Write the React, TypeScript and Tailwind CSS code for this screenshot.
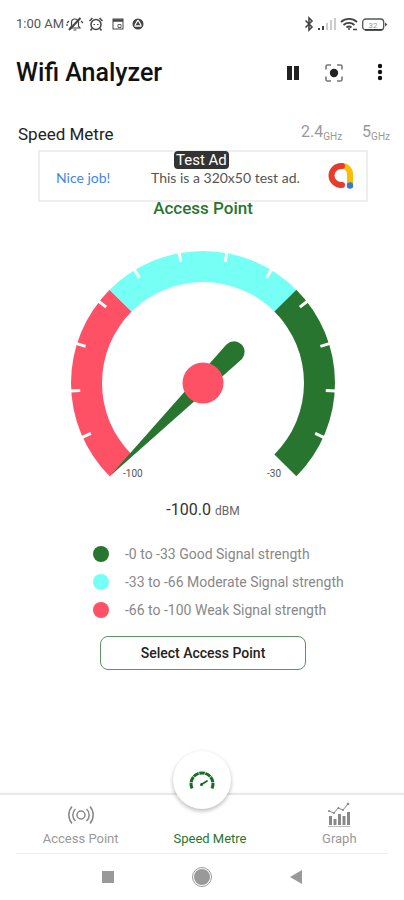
import type { ReactNode } from "react";

const CX = 133;
const CY = 133;

function point(radius: number, degrees: number): [number, number] {
  const a = (degrees * Math.PI) / 180;
  return [CX + radius * Math.cos(a), CY - radius * Math.sin(a)];
}

function band(from: number, to: number): string {
  const [x1, y1] = point(132, from);
  const [x2, y2] = point(132, to);
  const [x3, y3] = point(101, to);
  const [x4, y4] = point(101, from);
  return `M${x1} ${y1}A132 132 0 0 1 ${x2} ${y2}L${x3} ${y3}A101 101 0 0 0 ${x4} ${y4}Z`;
}

const TICKS = Array.from({ length: 12 }, (_, i) => 225 - ((i + 1) * 270) / 13);

function Gauge() {
  return (
    <svg viewBox="0 0 266 232" className="h-[232px] w-[266px]" role="img" aria-label="Signal gauge">
      <path d={band(225, 135)} fill="#ff5166" />
      <path d={band(135, 45)} fill="#76fff5" />
      <path d={band(45, -45)} fill="#28752f" />
      {TICKS.map((t) => {
        const [x1, y1] = point(133, t);
        const [x2, y2] = point(123, t);
        return <line key={t} x1={x1} y1={y1} x2={x2} y2={y2} stroke="#fff" strokeWidth="3" />;
      })}
      <path d="M39.5 226.5 156 95A10.5 10.5 0 0 1 172 109Z" fill="#28752f" />
      <circle cx={CX} cy={CY} r="20.5" fill="#ff5166" />
      <text x="53" y="227" fontSize="10" fill="#555" className="font-[Roboto,sans-serif]">-100</text>
      <text x="197" y="227" fontSize="10" fill="#555" className="font-[Roboto,sans-serif]">-30</text>
    </svg>
  );
}

function StatusBar() {
  return (
    <div className="flex h-12 items-center justify-between px-4 text-[#444]">
      <div className="flex items-center">
        <span className="w-[50px] text-[13px] whitespace-nowrap text-[#555]">1:00 AM</span>
        <svg viewBox="0 0 18 16" className="h-4 w-[18px]" fill="none" stroke="currentColor" strokeWidth="1.2">
          <path d="M4 12h10l-1.500-2V6.500A3.500 3.500 0 0 0 9 3 3.500 3.500 0 0 0 5.500 6.500V10ZM7.500 14h3M1 7l2-2M1 10V8M17 7l-2-2" />
          <path d="M3 14 14.500 2" strokeWidth="2" />
        </svg>
        <svg viewBox="0 0 16 16" className="ml-1 size-4" fill="none" stroke="currentColor" strokeWidth="1.500">
          <circle cx="8" cy="8.500" r="5" />
          <path d="M1.500 5 4.500 2M14.500 5l-3-3M4 12.500 2.500 14.500M12 12.500l1.500 2" />
          <path d="M5.500 8.500H7M9 8.500h1.500" strokeWidth="1.200" />
        </svg>
        <svg viewBox="0 0 12 12" className="ml-2 size-3" fill="none" stroke="currentColor">
          <rect x="1" y="1" width="10" height="10" />
          <path d="M1 2.500h10" strokeWidth="2.500" />
          <path d="M6 6.500h3v3H6z" strokeWidth=".8" />
        </svg>
        <svg viewBox="0 0 12 12" className="ml-2 size-3">
          <circle cx="6" cy="6" r="5.500" fill="currentColor" />
          <path d="M6 2 3 7M6 2l3 5M2.500 8h7" stroke="#fff" strokeWidth="1.300" fill="none" />
        </svg>
      </div>
      <div className="flex items-center">
        <svg viewBox="0 0 10 16" className="mr-1 h-4 w-[10px]" fill="none" stroke="currentColor" strokeWidth="1.600">
          <path d="m1.500 4.500 6.500 6.500-3 3V2l3 3-6.500 6.500" />
        </svg>
        <svg viewBox="0 0 18 12" className="h-3 w-[18px]" fill="currentColor">
          <path d="M0 10h2v2H0zM4 8h2v4H4z" />
          <path d="M8 5h2v7H8zM12 2h2v10h-2zM16 0h2v12h-2z" fill="#ccc" />
        </svg>
        <svg viewBox="0 0 18 14" className="ml-1 h-[14px] w-[18px]" fill="none" stroke="currentColor" strokeWidth="1.800">
          <path d="M1 5a12 12 0 0 1 16 0M3.500 8a8 8 0 0 1 11 0M6.500 10.500a4 4 0 0 1 5 0" />
          <path d="M8 12h2M13 12.500h4" strokeWidth="1.600" />
        </svg>
        <svg viewBox="0 0 26 13" className="ml-1 h-[13px] w-[26px]">
          <rect x=".7" y="1" width="21" height="11" rx="3" fill="none" stroke="#555" strokeWidth="1.300" />
          <path d="M3 11.800h17" stroke="#333" strokeWidth="1.500" />
          <path d="M23 4.500 25.500 6.500 23 8.500z" fill="#555" />
          <text x="11" y="9.500" fontSize="8" fill="#999" textAnchor="middle">32</text>
        </svg>
      </div>
    </div>
  );
}

function Header() {
  return (
    <header className="flex h-[50px] items-center justify-between pr-3 pl-4">
      <h1 className="text-[25px] font-medium text-[#111]">Wifi Analyzer</h1>
      <div className="flex items-center">
        <button type="button" aria-label="Pause" className="mr-[22px]">
          <svg viewBox="0 0 18 18" className="size-[18px]"><path d="M3 2h5v14H3zM10 2h5v14h-5z" fill="#222" /></svg>
        </button>
        <button type="button" aria-label="Scan" className="mr-6">
          <svg viewBox="0 0 20 20" className="size-5" fill="none" stroke="#777" strokeWidth="1.600">
            <path d="M2 6.500V3.500Q2 2 3.500 2H7M13 2h3.500Q18 2 18 3.500v3M18 13.500v3q0 1.500-1.500 1.500H13M7 18H3.500Q2 18 2 16.500v-3" />
            <circle cx="10" cy="10" r="4.200" fill="#222" stroke="none" />
          </svg>
        </button>
        <button type="button" aria-label="More options" className="w-6">
          <svg viewBox="0 0 24 20" className="h-5 w-6" fill="#111">
            <circle cx="12" cy="3" r="2.200" /><circle cx="12" cy="9" r="2.200" /><circle cx="12" cy="15" r="2.200" />
          </svg>
        </button>
      </div>
    </header>
  );
}

function AdBanner() {
  return (
    <a href="#ad" className="relative flex h-[52px] w-[330px] items-center border-2 border-[#eee] font-[Lato,sans-serif] text-sm leading-4">
      <span className="w-[111px] pt-1 pl-4 text-[#4384e8]">Nice job!</span>
      <span className="flex-1 pt-1 whitespace-nowrap text-[#555]">This is a 320x50 test ad.</span>
      <svg viewBox="0 0 26 28" className="mr-3 h-7 w-[26px]" fill="none" strokeWidth="6" strokeLinecap="round">
        <path d="M14 4a8 8 0 0 1 8 8v11" stroke="#fbbc04" />
        <path d="M14 4h-1a9.500 9.500 0 0 0 0 19h1" stroke="#e63c2e" />
        <circle cx="22" cy="23.500" r="3.200" fill="#3478d8" stroke="none" />
      </svg>
      <span className="absolute -top-px left-[134px] rounded-sm bg-[#333] px-[2px] font-[Roboto,sans-serif] text-[15px] leading-[18px] whitespace-nowrap text-white">Test Ad</span>
    </a>
  );
}

const LEGEND = [
  { dot: "bg-[#28752f]", text: "-0 to -33 Good Signal strength" },
  { dot: "bg-[#76fff5]", text: "-33 to -66 Moderate Signal strength" },
  { dot: "bg-[#ff5166]", text: "-66 to -100 Weak Signal strength" },
];

function Tab({ label, active, children }: { label: string; active?: boolean; children?: ReactNode }) {
  return (
    <a href="#tab" aria-current={active ? "page" : undefined} className={`flex flex-1 flex-col items-center text-[13px] leading-4 ${active ? "text-[#28752f]" : "text-[#999]"}`}>
      <span className="flex h-9 items-center pt-1">{children}</span>
      <span className="whitespace-nowrap">{label}</span>
    </a>
  );
}

function BottomNav() {
  return (
    <nav className="relative flex h-[60px] border-t-2 border-[#e8e8e8] pl-4 shadow-[0_-1px_2px_#00000008]">
      <Tab label="Access Point">
        <svg viewBox="0 0 26 20" className="h-5 w-[26px]" fill="none" stroke="#888" strokeWidth="1.500">
          <circle cx="13" cy="10" r="4" />
          <path d="M7.500 4a8 8 0 0 0 0 12M18.500 4a8 8 0 0 1 0 12M4 1.500a13 13 0 0 0 0 17M22 1.500a13 13 0 0 1 0 17" />
        </svg>
      </Tab>
      <Tab label="Speed Metre" active />
      <Tab label="Graph">
        <svg viewBox="0 0 24 26" className="h-[26px] w-6" fill="#888">
          <path d="M2 14h3v9H2zM6.500 17h3v6h-3zM11 12h3v11h-3zM15.500 14h3v9h-3zM20 10h3v13h-3z" />
          <path d="M1 24.500h22" stroke="#bbb" />
          <path d="m2 9 5 2 4-5 5 2 5-6" fill="none" stroke="#888" />
          <circle cx="2" cy="9" r="1" /><circle cx="7" cy="11" r="1" /><circle cx="11.500" cy="6" r="1" /><circle cx="16" cy="8" r="1" /><circle cx="21" cy="2" r="1.300" />
        </svg>
      </Tab>
      <button type="button" aria-label="Speed Metre" className="absolute -top-11 left-1/2 flex size-[58px] -translate-x-1/2 items-center justify-center rounded-full bg-white shadow-[0_2px_4px_#00000045]">
        <svg viewBox="0 0 26 20" className="h-5 w-[26px]" fill="none" stroke="#176b27">
          <path d="M3 18.500A11 11 0 1 1 23 18.500" pathLength="69" strokeWidth="3" strokeDasharray="9 1" />
          <path d="m12.500 14.500 5.500-3.500" strokeWidth="1.800" strokeLinecap="round" />
          <circle cx="12.500" cy="14.500" r="1.500" fill="#176b27" stroke="none" />
        </svg>
      </button>
    </nav>
  );
}

export default function App() {
  return (
    <div className="flex min-h-screen flex-col bg-white font-[Roboto,sans-serif]">
      <StatusBar />
      <Header />
      <main className="flex flex-1 flex-col items-center pl-0.5">
        <div className="mt-6 flex h-7 w-full items-start justify-between pr-3.5 pl-4 leading-6">
          <h2 className="text-[17px] text-[#222]">Speed Metre</h2>
          <div className="flex gap-5 text-base leading-5 text-[#999]">
            <button type="button">2.4<sub className="text-[10px]">GHz</sub></button>
            <button type="button">5<sub className="text-[10px]">GHz</sub></button>
          </div>
        </div>
        <AdBanner />
        <h3 className="h-12 text-[17px] leading-3 font-medium text-[#28752f]">Access Point</h3>
        <Gauge />
        <p className="mt-4 text-base leading-6 text-[#333]">-100.0 <span className="text-xs text-[#666]">dBM</span></p>
        <ul className="mt-[18px] w-[220px] text-sm text-[#888]">
          {LEGEND.map((item) => (
            <li key={item.text} className="flex h-7 items-center gap-4 whitespace-nowrap">
              <span className={`size-4 shrink-0 rounded-full ${item.dot}`} />{item.text}
            </li>
          ))}
        </ul>
        <button type="button" className="mt-3 h-[34px] w-[206px] rounded-lg border border-[#5c9463] text-sm font-medium text-[#222]">Select Access Point</button>
      </main>
      <BottomNav />
      <div className="mx-4 flex h-[47px] items-center justify-center border-t border-[#eee]">
        <button type="button" aria-label="Recent apps" className="size-3 bg-[#999]" />
        <button type="button" aria-label="Home" className="mx-[78px] flex size-5 items-center justify-center rounded-full border border-[#999]"><span className="size-4 rounded-full bg-[#999]" /></button>
        <button type="button" aria-label="Back"><svg viewBox="0 0 12 14" className="h-[14px] w-3"><path d="M0 7 12 0v14z" fill="#999" /></svg></button>
      </div>
    </div>
  );
}
